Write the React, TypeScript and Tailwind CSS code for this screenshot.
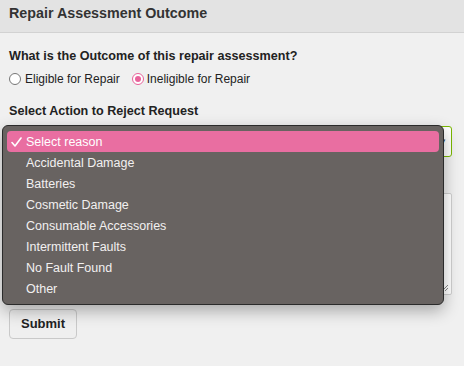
import React from "react";

const items = [
  "Accidental Damage",
  "Batteries",
  "Cosmetic Damage",
  "Consumable Accessories",
  "Intermittent Faults",
  "No Fault Found",
  "Other",
];

export default function App() {
  return (
    <div
      className="relative w-[464px] h-[366px] overflow-hidden bg-[#f0f0f0] text-[#222]"
      style={{ fontFamily: '"Liberation Sans", Arial, sans-serif' }}
    >
      <div className="h-[33px] bg-[#e3e3e3] border-b border-[#d2d2d2] flex items-center px-[9px] pb-[4px]">
        <span className="text-[14.3px] font-bold text-[#333]">Repair Assessment Outcome</span>
      </div>
      <div className="px-[9px] pt-[15px]">
        <div className="text-[12.6px] font-bold leading-[16px] text-[#222]">
          What is the Outcome of this repair assessment?
        </div>
        <div className="flex items-center mt-[7px] text-[12px] leading-[16px]">
          <span className="w-[12px] h-[12px] rounded-full border border-[#767676] bg-white" />
          <span className="ml-[4px]">Eligible for Repair</span>
          <span className="ml-[12px] w-[12px] h-[12px] rounded-full border border-[#e8629a] bg-white flex items-center justify-center">
            <span className="w-[6px] h-[6px] rounded-full bg-[#e8629a]" />
          </span>
          <span className="ml-[3px]">Ineligible for Repair</span>
        </div>
        <div className="text-[12.6px] font-bold leading-[16px] mt-[16px]">
          Select Action to Reject Request
        </div>
        <div className="mt-[7px] h-[31px] w-[443px] bg-white border border-[#7ab800] rounded-[3px] flex items-center justify-end pr-[4px]">
          <span className="text-[8px] text-[#444]">▼</span>
        </div>
        <div className="mt-[36px] h-[102px] w-[443px] bg-white border border-[#cfcfcf] rounded-[2px] relative">
          <svg className="absolute right-[2px] bottom-[2px]" width="8" height="8" viewBox="0 0 8 8">
            <line x1="1" y1="7" x2="7" y2="1" stroke="#888" strokeWidth="1" />
            <line x1="4" y1="7" x2="7" y2="4" stroke="#888" strokeWidth="1" />
          </svg>
        </div>
        <button className="mt-[14px] h-[30px] px-[11px] bg-[#efefef] border border-[#c9c9c9] rounded-[4px] text-[13px] font-bold text-[#222]">
          Submit
        </button>
      </div>

      <div className="absolute left-[2px] top-[125px] w-[442px] h-[180px] bg-[#686361] border border-[#2b2b2b] rounded-[6px] shadow-[0_6px_16px_rgba(0,0,0,0.3)] px-[4px] pt-[5px]">
        <div className="h-[21px] bg-[#e96ea1] rounded-[4px] flex items-center pt-[1px] text-[12.5px] text-white">
          <svg className="ml-[4px] mr-[4px]" width="11" height="10" viewBox="0 0 11 10">
            <path d="M1 5.5 L4 9 L10 1" fill="none" stroke="#fff" strokeWidth="1.6" strokeLinecap="round" strokeLinejoin="round" />
          </svg>
          <span>Select reason</span>
        </div>
        {items.map((t) => (
          <div key={t} className="h-[21px] flex items-center pt-[2px] pl-[19px] text-[12.5px] text-[#f2f0f0]">
            {t}
          </div>
        ))}
      </div>
    </div>
  );
}
